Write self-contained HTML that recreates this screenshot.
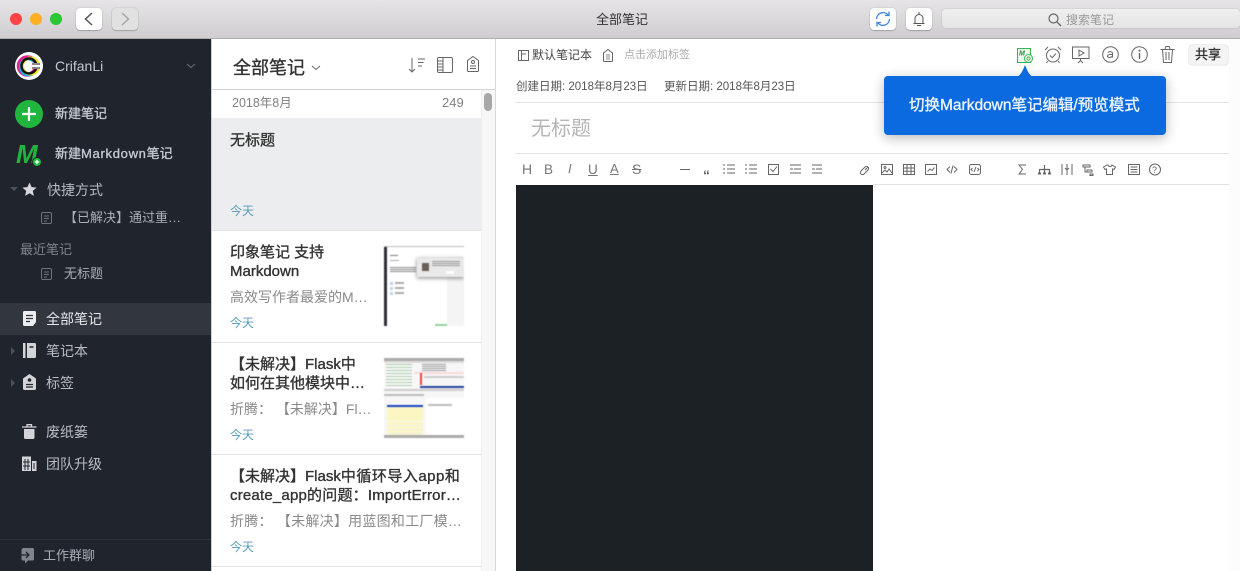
<!DOCTYPE html>
<html><head><meta charset="utf-8">
<style>
html,body{margin:0;padding:0;width:1240px;height:571px;overflow:hidden;background:#fff}
body{position:relative;font-family:"Liberation Sans","Noto Sans CJK SC",sans-serif;color:#333}
.a,.t{position:absolute;white-space:nowrap}
.t{line-height:20px}
.a{display:block}
svg{position:absolute;overflow:visible}
.s{fill:none;stroke:#666;stroke-width:1}
.m{-webkit-text-stroke:.35px currentColor}
.btn{position:absolute;background:#fff;border-radius:4px;box-shadow:0 0 1px rgba(0,0,0,.3),0 1px 1px rgba(0,0,0,.2)}
.side{color:#c3c8cd;font-size:14px}
.tt{font-size:15px;color:#333;line-height:19px;-webkit-text-stroke:.35px #333}
.gr{font-size:14px;color:#8a8a8a}
.today{font-size:12px;color:#5b9cbd}
.ln{position:absolute;background:#e3e3e3;height:1px}
.tb{color:#777}
</style></head><body>
<!-- titlebar -->
<div class="a" style="left:0;top:0;width:1240px;height:38px;background:linear-gradient(#e6e4e6,#cfcdcf);border-bottom:1px solid #aeaeae"></div>
<div class="a" style="left:10px;top:13px;width:12px;height:12px;border-radius:50%;background:#fc4346"></div>
<div class="a" style="left:30px;top:13px;width:12px;height:12px;border-radius:50%;background:#fdb024"></div>
<div class="a" style="left:50px;top:13px;width:12px;height:12px;border-radius:50%;background:#2ac833"></div>
<div class="btn" style="left:76px;top:8px;width:26px;height:22px"></div>
<svg style="left:76px;top:8px" width="26" height="22"><path d="M16 5l-6.500 6 6.500 6" class="s" style="stroke:#555;stroke-width:1.500"/></svg>
<div class="btn" style="left:112px;top:8px;width:26px;height:22px;background:#e2e1e2"></div>
<svg style="left:112px;top:8px" width="26" height="22"><path d="M10 5l6.500 6-6.500 6" class="s" style="stroke:#a5a5a5;stroke-width:1.500"/></svg>
<span class="t" style="left:596px;top:10px;font-size:13px;color:#333">全部笔记</span>
<div class="btn" style="left:870px;top:8px;width:26px;height:22px"></div>
<svg style="left:870px;top:8px" width="26" height="22" viewBox="0 0 26 22"><path d="M6.500 11a6.500 6.500 0 0 1 11.500-4M19.500 11a6.500 6.500 0 0 1-11.500 4" class="s" style="stroke:#3b82d8;stroke-width:1.300"/><path d="M19 3.500v4h-4M7 18.500v-4h4" class="s" style="stroke:#3b82d8;stroke-width:1.300"/></svg>
<div class="btn" style="left:906px;top:8px;width:26px;height:22px"></div>
<svg style="left:906px;top:8px" width="26" height="22"><path d="M7.500 15.500h11M9 15.500v-5a4 4 0 0 1 8 0v5M13 4v2.500M11 17.500h4" class="s" style="stroke:#555"/></svg>
<div class="a" style="left:942px;top:9px;width:298px;height:19px;background:linear-gradient(#efefef,#e6e5e6);border-radius:4px;box-shadow:0 0 1px rgba(0,0,0,.3)"></div>
<svg style="left:1048px;top:13px" width="14" height="14"><circle cx="5.500" cy="5.500" r="4.500" class="s" style="stroke:#666;stroke-width:1.200"/><path d="M9 9l4 4" class="s" style="stroke:#666;stroke-width:1.300"/></svg>
<span class="t" style="left:1066px;top:10px;font-size:12px;color:#999">搜索笔记</span>

<!-- sidebar -->
<div class="a" style="left:0;top:39px;width:211px;height:532px;background:#20252d"></div>
<div class="a" style="left:15px;top:52px;width:28px;height:28px;border-radius:50%;background:#fff"></div>
<svg style="left:15px;top:52px" width="28" height="28"><circle cx="12.500" cy="14" r="8.500" fill="none" stroke="#e0208f" stroke-width="4.500"/><circle cx="13.500" cy="15" r="8" fill="none" stroke="#19b5e8" stroke-width="3"/><circle cx="15.500" cy="14" r="8" fill="none" stroke="#f5e31c" stroke-width="3"/><circle cx="14" cy="14" r="7.500" fill="none" stroke="#111" stroke-width="2.500"/><path d="M17 11h9v6h-9z" fill="#fff"/><path d="M17 12h8M17 16h8" stroke="#111" stroke-width="1"/></svg>
<span class="t side" style="left:55px;top:56px">CrifanLi</span>
<svg style="left:186px;top:63px" width="10" height="6"><path d="M1 1l4 3.500 4-3.500" class="s" style="stroke:#6c727a"/></svg>
<div class="a" style="left:15px;top:100px;width:28px;height:28px;border-radius:50%;background:#20b53c"></div>
<svg style="left:15px;top:100px" width="28" height="28"><path d="M14 7v14M7 14h14" stroke="#fff" stroke-width="2.200"/></svg>
<span class="t side m" style="left:55px;top:104px;font-size:13px">新建笔记</span>
<svg style="left:16px;top:143px" width="28" height="24"><text x="0" y="20" font-size="26" font-weight="bold" font-style="italic" fill="#20b53c" font-family="Liberation Sans">M</text><circle cx="21" cy="19" r="4.500" fill="#20b53c" stroke="#20252d" stroke-width="1"/><path d="M21 16.800v4.400M18.800 19h4.400" stroke="#fff" stroke-width="1.200"/></svg>
<span class="t side m" style="left:55px;top:144px;font-size:13px">新建<span style="letter-spacing:.7px">Markdown</span>笔记</span>
<svg style="left:10px;top:187px" width="8" height="5"><path d="M0 0h8L4 4z" fill="#4b5159"/></svg>
<svg style="left:22px;top:182px" width="15" height="15"><path d="M7.500 0.500l2.100 4.600 5 .5-3.800 3.300 1.100 5-4.400-2.600-4.400 2.600 1.100-5L.4 5.600l5-.5z" fill="#d5d7da"/></svg>
<span class="t side" style="left:47px;top:180px;color:#b4b9bf">快捷方式</span>
<svg style="left:41px;top:212px" width="11" height="12"><rect x=".5" y=".5" width="10" height="11" rx="1.500" fill="none" stroke="#6f757c"/><path d="M3 4h5M3 6.500h5M3 9h3" stroke="#6f757c"/></svg>
<span class="t" style="left:64px;top:208px;font-size:13px;color:#a9aeb4">【已解决】通过重…</span>
<span class="t" style="left:20px;top:240px;font-size:13px;color:#7e848b">最近笔记</span>
<svg style="left:41px;top:268px" width="11" height="12"><rect x=".5" y=".5" width="10" height="11" rx="1.500" fill="none" stroke="#6f757c"/><path d="M3 4h5M3 6.500h5M3 9h3" stroke="#6f757c"/></svg>
<span class="t" style="left:64px;top:264px;font-size:13px;color:#a9aeb4">无标题</span>
<div class="a" style="left:0;top:303px;width:211px;height:32px;background:#32373f"></div>
<svg style="left:23px;top:311px" width="13" height="15"><path d="M1.500 0h10A1.500 1.500 0 0 1 13 1.500V11l-3 4H1.500A1.500 1.500 0 0 1 0 13.500V1.500A1.500 1.500 0 0 1 1.500 0z" fill="#eceef0"/><path d="M3 4.500h7M3 7.500h7M3 10.500h4" stroke="#32373f" stroke-width="1.200"/></svg>
<span class="t" style="left:46px;top:309px;font-size:14px;color:#e4e6e8">全部笔记</span>
<svg style="left:11px;top:347px" width="4" height="8"><path d="M0 0l4 4-4 4z" fill="#4b5159"/></svg>
<svg style="left:23px;top:343px" width="13" height="15"><rect x="0" y="0" width="2.500" height="15" fill="#d2d4d7"/><path d="M4 0h7.500A1.500 1.500 0 0 1 13 1.500v12a1.500 1.500 0 0 1-1.500 1.500H4z" fill="#d2d4d7"/><path d="M6.500 4h4" stroke="#20252d" stroke-width="1.500"/></svg>
<span class="t side" style="left:46px;top:341px;color:#b9bdc2">笔记本</span>
<svg style="left:11px;top:379px" width="4" height="8"><path d="M0 0l4 4-4 4z" fill="#4b5159"/></svg>
<svg style="left:23px;top:374px" width="13" height="16"><path d="M6.500 0L13 4.500V14.500a1.500 1.500 0 0 1-1.500 1.500h-10A1.500 1.500 0 0 1 0 14.500V4.500z" fill="#d2d4d7"/><circle cx="6.500" cy="6" r="1.800" fill="#20252d"/><path d="M3 10.500h7M3 13h7" stroke="#20252d" stroke-width="1.200"/></svg>
<span class="t side" style="left:46px;top:373px;color:#b9bdc2">标签</span>
<svg style="left:22px;top:424px" width="15" height="15"><path d="M0 3h14.500M5 2.500V.7h4.500v1.800" stroke="#d2d4d7" stroke-width="1.300" fill="none"/><path d="M2 5h10.500v8.500a1.500 1.500 0 0 1-1.500 1.500H3.500A1.500 1.500 0 0 1 2 13.500z" fill="#d2d4d7"/></svg>
<span class="t side" style="left:46px;top:422px;color:#b9bdc2">废纸篓</span>
<svg style="left:22px;top:456px" width="15" height="15"><path d="M0 .5h9V15H0z" fill="#d2d4d7"/><path d="M3 3v11M6 3v11M1 6h7M1 10h7" stroke="#20252d"/><rect x="10" y="5" width="4.500" height="10" fill="#d2d4d7"/><path d="M12 7v6" stroke="#20252d" stroke-width="1"/></svg>
<span class="t side" style="left:46px;top:454px;color:#b9bdc2">团队升级</span>
<div class="a" style="left:0;top:539px;width:211px;height:1px;background:#2d323a"></div>
<svg style="left:21px;top:548px" width="13" height="16"><path d="M2 0h9.500A1.500 1.500 0 0 1 13 1.500V11a1.500 1.500 0 0 1-1.500 1.500H7L4 15.500v-3H2A1.500 1.500 0 0 1 .5 11V1.500z" fill="#80858b"/><path d="M0 7h7M5 4l3 3-3 3" stroke="#20252d" stroke-width="1.300" fill="none"/></svg>
<span class="t" style="left:43px;top:546px;font-size:13px;color:#a9aeb4">工作群聊</span>

<!-- list -->
<div class="a" style="left:495px;top:39px;width:1px;height:532px;background:#d9d9d9"></div>
<div class="a" style="left:211px;top:39px;width:1px;height:532px;background:#cfcfcf"></div>
<span class="t m" style="left:233px;top:58px;font-size:18px;color:#333">全部笔记</span>
<svg style="left:311px;top:65px" width="10" height="6"><path d="M1 1l4 3.500 4-3.500" class="s" style="stroke:#666"/></svg>
<svg style="left:408px;top:57px" width="18" height="16"><path d="M4 1v14M1 12l3 3 3-3M10 2h7M10 5.500h5.500M10 9h4" class="s"/></svg>
<svg style="left:437px;top:57px" width="16" height="16"><rect x=".5" y=".5" width="15" height="15" rx="1.500" class="s"/><path d="M6 .5v15M1 4h5M1 7h5M1 10h5M1 13h5" class="s"/></svg>
<svg style="left:467px;top:56px" width="12" height="16"><path d="M6 .5l5.500 4v10a1 1 0 0 1-1 1h-9a1 1 0 0 1-1-1v-10z" class="s"/><circle cx="6" cy="6" r="1.500" class="s"/><path d="M3 10h6M3 12.500h6" class="s"/></svg>
<div class="a" style="left:212px;top:89px;width:283px;height:1px;background:#d4d4d4"></div>
<div class="a" style="left:481px;top:90px;width:14px;height:481px;background:#f7f7f7;border-left:1px solid #efefef;box-sizing:border-box"></div>
<div class="a" style="left:484px;top:93px;width:8px;height:18px;border-radius:4px;background:#a8a8a8"></div>
<span class="t" style="left:232px;top:93px;font-size:12.500px;color:#808080">2018年8月</span>
<span class="t" style="left:442px;top:93px;font-size:13px;color:#808080">249</span>
<div class="a" style="left:212px;top:118px;width:269px;height:112px;background:#ecedee"></div>
<span class="a tt" style="left:230px;top:131px">无标题</span>
<span class="t today" style="left:230px;top:201px">今天</span>
<div class="ln" style="left:212px;top:230px;width:269px"></div>
<span class="a tt" style="left:230px;top:243px;white-space:normal;width:110px">印象笔记 支持 Markdown</span>
<span class="t gr" style="left:230px;top:287px">高效写作者最爱的M…</span>
<span class="t today" style="left:230px;top:313px">今天</span>
<!-- thumb 1 -->
<div class="a" style="left:384px;top:246px;width:80px;height:80px;background:#fff;overflow:hidden;filter:blur(.6px)">
<div class="a" style="left:0;top:0;width:3px;height:80px;background:#2c2f35"></div>
<div class="a" style="left:0;top:0;width:80px;height:1px;background:#bbb"></div>
<div class="a" style="left:63px;top:11px;width:17px;height:69px;background:#f4f4f4"></div>
<div class="a" style="left:6px;top:9px;width:8px;height:1px;background:#777"></div>
<div class="a" style="left:6px;top:14px;width:9px;height:1px;background:#aaa"></div>
<div class="a" style="left:6px;top:21px;width:26px;height:6px;background:repeating-linear-gradient(#888 0 1px,#fff 1px 2px)"></div>
<div class="a" style="left:6px;top:36px;width:3px;height:15px;background:repeating-linear-gradient(#bcd4ee 0 3px,#fff 3px 5px)"></div>
<div class="a" style="left:11px;top:36px;width:9px;height:15px;background:repeating-linear-gradient(#aaa 0 2px,#fff 2px 5px)"></div>
<div class="a" style="left:33px;top:12px;width:47px;height:19px;background:#e9e9e9;box-shadow:0 1px 4px rgba(0,0,0,.5)"></div>
<div class="a" style="left:38px;top:17px;width:7px;height:8px;background:#6a5f57"></div>
<div class="a" style="left:48px;top:15px;width:28px;height:5px;background:repeating-linear-gradient(#999 0 1px,#e9e9e9 1px 2px)"></div>
<div class="a" style="left:62px;top:25px;width:8px;height:3px;background:#fff"></div>
<div class="a" style="left:51px;top:78px;width:12px;height:2px;background:#8fd09a"></div>
</div>
<div class="ln" style="left:212px;top:342px;width:269px"></div>
<span class="a tt" style="left:230px;top:355px;width:140px;white-space:normal">【未解决】Flask中<br>如何在其他模块中…</span>
<span class="t gr" style="left:230px;top:399px">折腾： 【未解决】Fl…</span>
<span class="t today" style="left:230px;top:425px">今天</span>
<!-- thumb 2 -->
<div class="a" style="left:384px;top:358px;width:80px;height:80px;background:#f7f7f7;overflow:hidden;filter:blur(.6px)">
<div class="a" style="left:0;top:0;width:80px;height:3px;background:#aaa"></div>
<div class="a" style="left:0;top:3px;width:80px;height:2px;background:#ddd"></div>
<div class="a" style="left:2px;top:6px;width:26px;height:24px;background:repeating-linear-gradient(#a9c9a9 0 1px,#fafafa 1px 3px)"></div>
<div class="a" style="left:38px;top:6px;width:24px;height:7px;background:repeating-linear-gradient(#999 0 1px,#fff 1px 2px)"></div>
<div class="a" style="left:30px;top:14px;width:50px;height:2px;background:#fbd9d9"></div>
<div class="a" style="left:36px;top:15px;width:2px;height:12px;background:#e44"></div>
<div class="a" style="left:40px;top:18px;width:40px;height:2px;background:#ccc"></div>
<div class="a" style="left:36px;top:28px;width:44px;height:2px;background:#24439b"></div>
<div class="a" style="left:0;top:31px;width:80px;height:2px;background:#ccc"></div>
<div class="a" style="left:0;top:36px;width:40px;height:2px;background:#bbb"></div>
<div class="a" style="left:3px;top:47px;width:36px;height:2px;background:#1444c8"></div>
<div class="a" style="left:3px;top:49px;width:36px;height:14px;background:#fcf7c2"></div>
<div class="a" style="left:3px;top:64px;width:36px;height:13px;background:repeating-linear-gradient(#fcf7c2 0 3px,#eee 3px 4px)"></div>
<div class="a" style="left:42px;top:40px;width:38px;height:37px;background:#fff"></div>
<div class="a" style="left:44px;top:46px;width:24px;height:2px;background:#bbb"></div>
<div class="a" style="left:0;top:77px;width:80px;height:3px;background:#aaa"></div>
</div>
<div class="ln" style="left:212px;top:454px;width:269px"></div>
<span class="a tt" style="left:230px;top:467px;width:250px;white-space:nowrap">【未解决】Flask<span style="letter-spacing:.5px">中循环导入app</span>和<br><span style="letter-spacing:.2px">create_app的问题：ImportError…</span></span>
<span class="t gr" style="left:230px;top:511px;letter-spacing:.25px">折腾： 【未解决】用蓝图和工厂模…</span>
<span class="t today" style="left:230px;top:537px">今天</span>
<div class="ln" style="left:212px;top:566px;width:269px"></div>

<!-- editor -->
<svg style="left:518px;top:50px" width="11" height="11"><rect x=".5" y=".5" width="10" height="10" class="s"/><path d="M3.500 1v9M4 4h4" class="s"/></svg>
<span class="t" style="left:532px;top:45px;font-size:12px;color:#444">默认笔记本</span>
<svg style="left:603px;top:49px" width="10" height="13"><path d="M5 .5l4.500 3.500v8a.5.500 0 0 1-.5.500H1a.5.500 0 0 1-.5-.5V4z" class="s"/><path d="M3 6h4M3 8h4M3 10h4" class="s" style="stroke-width:.8"/></svg>
<span class="t" style="left:624px;top:45px;font-size:11px;color:#aaa">点击添加标签</span>
<span class="t" style="left:516px;top:77px;font-size:11.500px;color:#555">创建日期: 2018年8月23日</span>
<span class="t" style="left:664px;top:77px;font-size:11.500px;color:#555">更新日期: 2018年8月23日</span>
<div class="ln" style="left:516px;top:102px;width:713px"></div>
<span class="t" style="left:531px;top:118px;font-size:20px;line-height:22px;color:#b5b5b5">无标题</span>
<div class="ln" style="left:516px;top:153px;width:713px"></div>
<!-- toolbar text icons -->
<span class="t tb" style="left:522px;top:159px;font-size:14px">H</span>
<span class="t tb" style="left:544px;top:160px;font-size:13.500px">B</span>
<span class="t tb" style="left:568px;top:159px;font-size:13px;font-style:italic">I</span>
<span class="t tb" style="left:588px;top:160px;font-size:13.500px;text-decoration:underline">U</span>
<span class="t tb" style="left:610px;top:159px;font-size:13px;text-decoration:underline">A</span>
<span class="t tb" style="left:632px;top:159px;font-size:14px;text-decoration:line-through">S</span>
<svg style="left:680px;top:164px" width="150" height="12"><g class="s" style="stroke-width:1"><path d="M0 5.500h10"/><path d="M47 1h8M47 5h8M47 9h8M43 1h2M43 5h2M43 9h2"/><path d="M69 1h8M69 5h8M69 9h8M65 1h2M65 5h2M65 9h2"/><rect x="88.500" y=".5" width="10" height="10"/><path d="M90.500 5l2.500 2.500 4-5"/><path d="M110 1h11M114 5h7M110 9h11M110 5h3"/><path d="M132 1h10M136 5h6M132 9h10M132 5h3"/></g></svg>
<span class="t" style="left:703px;top:165px;font-size:14px;color:#666;font-weight:bold">“</span>
<svg style="left:859px;top:162px" width="310" height="15"><g class="s">
<path d="M2 8l4-4a2 2 0 0 1 3 3l-4 4a2 2 0 0 1-3-3zM6 7l3-3" transform="translate(0 1)"/>
<rect x="22.500" y="2.500" width="11" height="10"/><path d="M23 11l3-3 2 2 2-3 3 4"/><circle cx="26" cy="5.500" r="1"/>
<rect x="44.500" y="2.500" width="11" height="10"/><path d="M44.500 6h11M44.500 9.300h11M48 2.500v10M52 2.500v10"/>
<rect x="66.500" y="2.500" width="11" height="10"/><path d="M68.500 9.500l2.500-2.500 2 1.500 2.500-3"/>
<path d="M91 5l-3 3 3 3M95 5l3 3-3 3M94 4l-2 8" transform="translate(0 -.5)"/>
<rect x="110.500" y="2.500" width="11" height="10" rx="2"/><path d="M113.500 6l-1.500 1.500 1.500 1.500M118.500 6l1.500 1.500-1.500 1.500M117 5l-2 5"/>
<path d="M167 3h-7l3.500 4.500-3.500 4.500h7"/>
<path d="M185.500 3v4M180.500 11V7.500h10V11M185.500 7.500V11" style="stroke-width:1.200"/><path d="M179 10.500h3v2h-3zM184 10.500h3v2h-3zM189 10.500h3v2h-3z" style="fill:#666;stroke:none"/>
<path d="M203 2v11M213 2v11M208 2v11M206 6l2 2 2-2" />
<path d="M224 3h7v2h-7zM228 8h5v2h-5zM231 12h3v1.500h-3zM226 5v5h3" style="stroke-width:1"/>
<path d="M248 3l-3.500 2 1.500 2.500 1.500-.5v5.500h6V7l1.500.5 1.500-2.500-3.500-2c-.5 2-3.500 2-4 0z"/>
<rect x="269.500" y="2.500" width="11" height="10"/><path d="M271.500 5h7M271.500 7.500h7M271.500 10h7"/>
<circle cx="296" cy="7.500" r="5.500"/>
</g></svg>
<span class="t" style="left:1152px;top:160px;font-size:9px;color:#666">?</span>
<div class="a" style="left:516px;top:185px;width:357px;height:386px;background:#1c2126"></div>
<div class="a" style="left:873px;top:184px;width:356px;height:1px;background:#e3e3e3"></div>
<div class="a" style="left:1229px;top:39px;width:11px;height:532px;background:#fcfcfc"></div>

<!-- top right icons -->
<svg style="left:1016px;top:47px" width="17" height="17"><rect x="1.500" y="1.500" width="13" height="14" fill="#eef8ee" stroke="#30b94d"/><text x="3" y="8.500" font-size="7" font-weight="bold" font-style="italic" fill="#1f8f3a" font-family="Liberation Sans">M</text><circle cx="12.500" cy="11.500" r="4" fill="#fff" stroke="#30b94d"/><circle cx="12.500" cy="11.500" r="1.600" fill="none" stroke="#30b94d"/></svg>
<svg style="left:1044px;top:46px" width="18" height="18"><circle cx="9" cy="9.500" r="6.500" class="s"/><path d="M6 9.500l2.200 2.200L12 7.500M1 4l3-3M17 4l-3-3M4 15l-1.500 2M14 15l1.500 2" class="s"/></svg>
<svg style="left:1072px;top:46px" width="18" height="18"><path d="M.5 1h16.500v11.500H.5z" class="s"/><path d="M7 4l5 3-5 3zM8.500 12.500v2l-2.500 2.500M8.500 14.500l2.500 2.500" class="s"/></svg>
<svg style="left:1102px;top:46px" width="17" height="17"><circle cx="8.500" cy="8.500" r="7.800" class="s"/><path d="M6 6.500c1-1.200 4.500-1.200 4.500 1v4M10.500 8.500c-3-.3-5 .2-5 1.700 0 1.500 3.500 1.800 5-.2" class="s"/></svg>
<svg style="left:1131px;top:46px" width="17" height="17"><circle cx="8.500" cy="8.500" r="7.800" class="s"/><path d="M8.500 7v6" class="s" style="stroke-width:1.400"/><circle cx="8.500" cy="4.700" r="1" fill="#666"/></svg>
<svg style="left:1160px;top:46px" width="16" height="17"><path d="M.5 3.500h14M5 3l.8-2.500h3.500L10 3M2.500 3.500l1 13h8l1-13M6 6v8M9 6v8" class="s"/></svg>
<div class="a" style="left:1189px;top:45px;width:39px;height:20px;border-radius:3px;background:#f4f4f4;box-shadow:0 0 1px rgba(0,0,0,.4)"></div>
<span class="t m" style="left:1195px;top:45px;font-size:13px;color:#333">共享</span>

<!-- tooltip -->
<div class="a" style="left:884px;top:76px;width:282px;height:59px;background:#0b6ae0;border-radius:4px;box-shadow:0 3px 12px rgba(0,0,0,.28)"></div>
<svg style="left:1014px;top:64px" width="22" height="13"><path d="M0 13c5 0 7-2 11-12 4 10 6 12 11 12z" fill="#0b6ae0"/></svg>
<span class="t m" style="left:909px;top:96px;font-size:15.500px;color:#eef4ff">切换Markdown笔记编辑/预览模式</span>
</body></html>
